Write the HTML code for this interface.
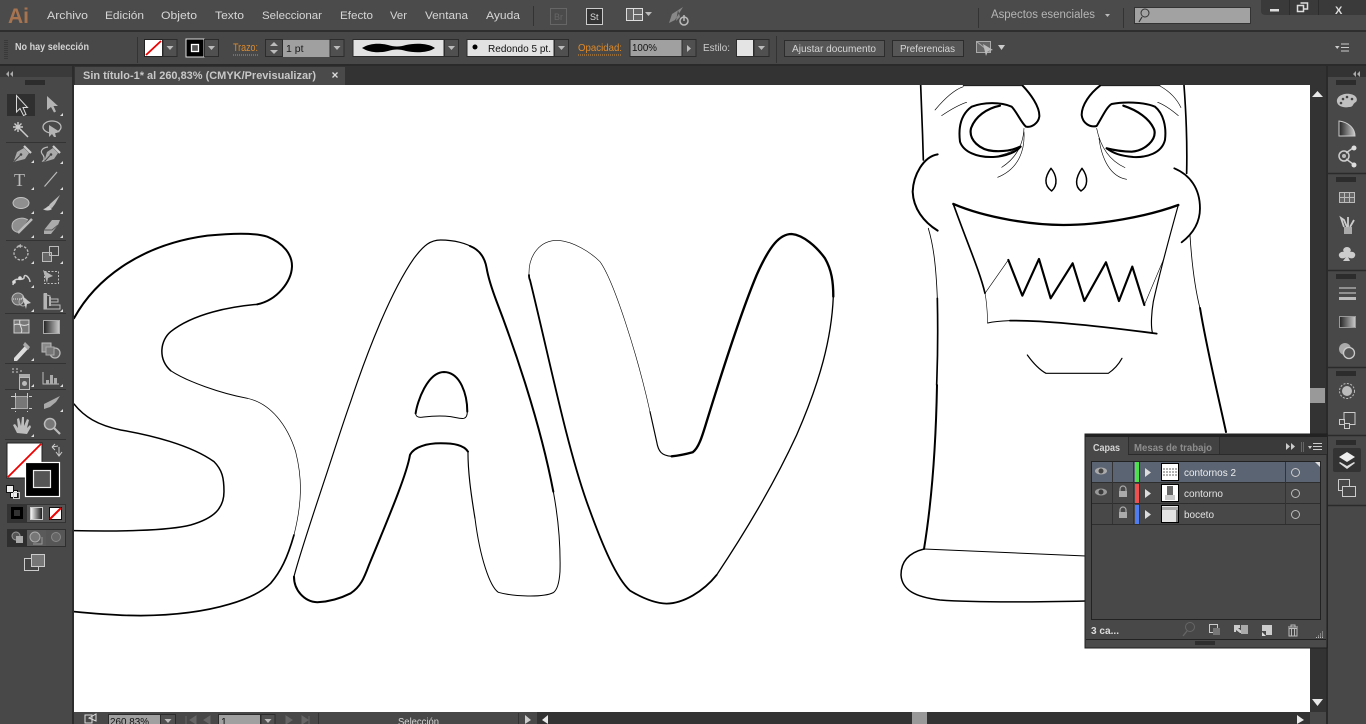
<!DOCTYPE html>
<html lang="es"><head><meta charset="utf-8"><title>Illustrator</title>
<style>
html,body{margin:0;padding:0;background:#484848;overflow:hidden}
svg{display:block;position:absolute;left:0;top:0}
text{font-family:"Liberation Sans",sans-serif;font-size:11px;fill:#d6d6d6}
</style></head><body>
<svg width="1366" height="724" viewBox="0 0 1366 724" xmlns="http://www.w3.org/2000/svg">
<defs>
<clipPath id="cv"><rect x="74" y="85" width="1236" height="627"/></clipPath>
<path id="c" d="M3 0V3H0Z" fill="#ddd"/>
<path id="d" d="M0 0H7L3.500 4Z" fill="#bbb"/>
<g id="grip"><path d="M0 0v5M2 0v5M4 0v5M6 0v5M8 0v5M10 0v5M12 0v5M14 0v5M16 0v5M18 0v5" stroke="#111" stroke-width="1"/></g>
<linearGradient id="g1"><stop offset="0" stop-color="#222"/><stop offset="1" stop-color="#ccc"/></linearGradient>
<linearGradient id="g2"><stop offset="0" stop-color="#fff"/><stop offset="1" stop-color="#111"/></linearGradient>
</defs>

<!-- backgrounds -->
<rect width="1366" height="724" fill="#484848"/>
<rect y="0" width="1366" height="30" fill="#4b4b4b"/>
<rect y="30" width="1366" height="2" fill="#2e2e2e"/>
<rect y="32" width="1366" height="32" fill="#484848"/>
<rect y="64" width="1366" height="2" fill="#2a2a2a"/>
<rect x="0" y="66" width="1366" height="19" fill="#333"/>
<rect x="0" y="66" width="72" height="646" fill="#484848"/>
<rect x="0" y="712" width="72" height="12" fill="#484848"/>
<rect x="0" y="66" width="72" height="11" fill="#3a3a3a"/>
<rect x="72" y="66" width="2" height="658" fill="#2c2c2c"/>
<rect x="75" y="67" width="270" height="18" fill="#4a4a4a"/>

<!-- canvas -->
<rect x="74" y="85" width="1236" height="627" fill="#fff"/>
<g clip-path="url(#cv)" fill="none" stroke="#000" stroke-linecap="round" stroke-linejoin="round">
 <!-- S -->
 <g transform="translate(74 225) scale(.3333)">
  <path stroke-width="6" d="M0 280C60 170 190 60 400 32C470 25 540 22 580 35C630 55 655 90 654 125C652 170 610 225 550 238"/>
  <path stroke-width="4.500" d="M550 238C470 245 360 265 290 320C260 345 250 400 290 437"/>
  <path stroke-width="3" d="M290 437C340 470 440 505 520 520"/>
  <path stroke-width="2" d="M520 520C590 535 640 600 665 680C685 760 685 830 660 930"/>
  <path stroke-width="5" d="M660 930C640 1000 620 1040 590 1075C550 1115 430 1170 200 1172C120 1172 50 1165 0 1160"/>
  <path stroke-width="4.500" d="M0 537C30 575 70 600 140 615C230 630 350 660 420 710C445 735 450 760 450 800C450 850 420 880 350 900C280 918 120 920 0 917"/>
  <!-- A -->
  <path stroke-width="3.500" d="M660 1055C665 1035 680 980 760 740C780 680 805 600 830 530C880 380 950 200 1020 100C1050 60 1070 45 1100 45C1140 45 1180 55 1200 70"/>
  <path stroke-width="6" d="M660 1055C660 1095 690 1130 730 1132C770 1130 800 1120 830 1105C860 1085 870 1060 885 1020C960 840 1000 740 1008 690C1020 665 1060 655 1100 655C1140 655 1170 660 1182 680"/>
  <path stroke-width="3.500" d="M1182 680C1182 740 1190 800 1203 880"/>
  <path stroke-width="6" d="M1025 565C1030 530 1060 442 1110 441C1160 442 1180 510 1180 560"/>
  <path stroke-width="3" d="M1180 560C1180 590 1160 580 1130 575C1090 570 1060 575 1040 577C1030 577 1025 572 1025 565"/>
 </g>
 <g transform="translate(470 225) scale(.3333)">
  <path stroke-width="6" d="M0 63C30 75 45 100 50 130C55 160 65 190 80 230C130 360 210 590 250 800"/>
  <path stroke-width="3" d="M250 800C265 880 272 960 270 1040C268 1070 262 1095 250 1103C220 1118 130 1115 85 1102C60 1085 30 1000 15 880"/>
  <!-- V -->
  <path stroke-width="1.800" d="M177 150C175 90 210 45 265 46C310 50 360 80 390 110C430 165 500 380 540 560"/>
  <path stroke-width="3.500" d="M540 560L560 650C565 680 575 692 605 694"/>
  <path stroke-width="7" d="M605 694C630 692 650 687 668 682C685 670 695 640 710 590C750 460 810 270 860 150C900 60 930 27 965 27C1000 30 1040 65 1065 100C1085 135 1090 170 1090 215"/>
  <path stroke-width="4" d="M1090 215C1085 340 1050 470 980 630C920 760 840 900 740 1050"/>
  <path stroke-width="5.500" d="M740 1050C700 1100 640 1135 590 1136C550 1135 510 1115 480 1097C440 1060 400 970 350 830C290 660 240 410 180 165C177 160 177 155 177 150"/>
 </g>
 <!-- face -->
 <g transform="translate(900 85) scale(.3333)">
  <path stroke-width="5" d="M62 0C65 70 68 150 70 225M852 0C858 80 862 180 860 265"/>
  <path stroke-width="2.500" d="M85 430C100 480 108 540 112 640"/>
  <path stroke-width="5" d="M112 640C115 780 112 840 110 900"/>
  <path stroke-width="2.500" d="M870 450C875 530 885 610 900 670"/>
  <path stroke-width="3" d="M190 2H368M780 2H600"/>
  <path stroke-width="6" d="M368 2C390 25 420 65 418 95C415 115 395 128 378 125C365 115 350 80 335 65C300 50 250 52 215 65C180 90 175 130 180 170C190 200 230 218 280 216C320 214 350 200 362 185"/>
  <path stroke-width="6.500" d="M300 62C260 70 225 95 213 130C205 165 240 195 280 198C310 200 340 195 360 185"/>
  <path stroke-width="6" d="M600 2C570 25 545 60 545 90C548 115 570 128 590 123C605 100 620 65 635 57C670 50 730 50 765 65C790 85 800 125 795 165C785 205 740 218 700 216C660 212 640 205 620 190"/>
  <path stroke-width="6.500" d="M670 62C710 75 750 100 763 135C770 165 735 197 695 200C670 200 640 195 620 190"/>
  <g stroke-width="1.800">
   <path d="M105 75C130 45 160 15 190 5M125 92C150 75 175 60 200 52M372 130C370 170 355 215 305 247M372 140C375 190 360 250 293 277M360 185C345 195 330 205 280 216"/>
   <path d="M780 3C810 20 830 40 843 68M773 52C795 60 815 75 835 92M590 130C600 180 625 225 675 248M597 160C605 220 630 275 680 283"/>
  </g>
  <path stroke-width="4.500" d="M453 250C435 275 430 300 455 318C475 300 470 270 453 250ZM546 250C525 280 525 305 543 318C565 305 565 275 546 250Z"/>
  <path stroke-width="6" d="M113 208C70 215 40 270 38 320C40 370 70 410 113 437"/>
  <path stroke-width="5.500" d="M823 250C870 270 900 310 900 370C900 410 880 445 845 472"/>
  <path stroke-width="7" d="M160 357C260 400 400 420 490 420C600 420 740 395 835 360"/>
  <path stroke-width="3.500" d="M835 360C810 450 780 560 760 650C755 680 752 720 757 742"/>
  <path stroke-width="5.500" d="M770 746C650 730 450 705 330 707"/>
  <path stroke-width="3" d="M330 707C300 708 280 710 263 714"/>
  <path stroke-width="5" d="M160 357C200 470 240 560 255 625"/>
  <path stroke-width="1.800" d="M255 625C262 660 262 690 263 714M255 625L325 525M733 660L790 525"/>
  <path stroke-width="6.500" d="M325 525L367 632L417 522L452 640L518 535L553 648L618 532L657 648L697 545L733 660"/>
  <path stroke-width="3.500" d="M382 810C400 835 420 855 438 865H625C640 855 655 840 666 820"/>
 </g>
 <path stroke-width="2" d="M937 385C936 440 932 500 924 549"/>
 <path stroke-width="2" d="M1200 308C1207 350 1218 395 1226 432"/>
 <path stroke-width="1" d="M924 549L1086 556"/>
 <path stroke-width="1.500" d="M924 549C908 553 901 562 901 575C902 590 915 597 940 600C980 603 1040 602 1086 601"/>
</g>

<!-- App bar -->
<text x="8" y="23" style="font-size:21px;font-weight:bold;fill:#a8744f">Ai</text>
<g style="font-size:11px">
<text x="47" y="19" textLength="41" lengthAdjust="spacingAndGlyphs">Archivo</text>
<text x="105" y="19" textLength="39" lengthAdjust="spacingAndGlyphs">Edición</text>
<text x="161" y="19" textLength="36" lengthAdjust="spacingAndGlyphs">Objeto</text>
<text x="215" y="19" textLength="29" lengthAdjust="spacingAndGlyphs">Texto</text>
<text x="262" y="19" textLength="60" lengthAdjust="spacingAndGlyphs">Seleccionar</text>
<text x="340" y="19" textLength="33" lengthAdjust="spacingAndGlyphs">Efecto</text>
<text x="390" y="19" textLength="17" lengthAdjust="spacingAndGlyphs">Ver</text>
<text x="425" y="19" textLength="43" lengthAdjust="spacingAndGlyphs">Ventana</text>
<text x="486" y="19" textLength="34" lengthAdjust="spacingAndGlyphs">Ayuda</text>
</g>
<path d="M533.500 6V26M978.500 8V28M1123.500 8V28" stroke="#333"/>
<rect x="550.500" y="8.500" width="16" height="16" fill="none" stroke="#666"/>
<text x="554" y="20" style="font-size:9px;fill:#666">Br</text>
<rect x="586.500" y="8.500" width="16" height="16" fill="#333" stroke="#ccc"/>
<text x="590" y="20" style="font-size:9px;fill:#ddd">St</text>
<path d="M626.500 8.500H642.500V20.500H626.500ZM633.500 8.500V20.500M633.500 14.500H642.500" fill="#666" stroke="#ddd"/>
<use href="#d" x="645" y="12"/>
<path d="M683 7L672 14L669 23L675 20ZM678 10L680 17L676 21Z" fill="#888"/>
<circle cx="684" cy="21" r="4" fill="none" stroke="#bbb" stroke-width="1.500"/><path d="M684 15V21" stroke="#bbb" stroke-width="1.500"/>
<text x="991" y="18" textLength="104" lengthAdjust="spacingAndGlyphs" style="fill:#b5b5b5;font-size:11.500px">Aspectos esenciales</text>
<path d="M1105 14H1110L1107.500 17Z" fill="#bbb"/>
<rect x="1134.500" y="7.500" width="116" height="16" fill="#a2a2a2" stroke="#333"/>
<circle cx="1145" cy="13" r="4" fill="none" stroke="#333"/><path d="M1142 17L1139 22" stroke="#333" stroke-width="1.200"/>
<path d="M1261 0H1366V15H1266Q1261 15 1261 11Z" fill="#3a3a3a"/>
<path d="M1289.500 0V15M1318.500 0V15" stroke="#2c2c2c"/>
<rect x="1270" y="9" width="9" height="2.500" fill="#ddd"/>
<path d="M1297.500 5.500H1303.500V11.500H1297.500ZM1300.500 3H1307.500V9H1303.500" fill="none" stroke="#ddd" stroke-width="1.500"/>
<text x="1335" y="14" style="font-size:11px;font-weight:bold;fill:#ddd">X</text>

<!-- Control bar -->
<path d="M5 40V60M7 40V60" stroke="#2a2a2a" stroke-dasharray="1 1"/>
<path d="M137.500 37V63" stroke="#333"/>
<text x="15" y="50" textLength="74" lengthAdjust="spacingAndGlyphs" style="font-size:10.500px;font-weight:bold;fill:#d4d4d4">No hay selección</text>
<rect x="144.500" y="39.500" width="18" height="17" fill="#fff" stroke="#222"/>
<path d="M146 55L161 41" stroke="#e00" stroke-width="1.800"/>
<rect x="163" y="39.500" width="14" height="17" fill="#505050" stroke="#2c2c2c"/><use href="#d" x="166.500" y="46"/>
<rect x="186" y="39" width="18" height="18" fill="#000" stroke="#ddd"/>
<rect x="191.500" y="44.500" width="7" height="7" fill="#555" stroke="#fff" stroke-width="1.300"/>
<rect x="204.500" y="39.500" width="14" height="17" fill="#505050" stroke="#2c2c2c"/><use href="#d" x="208" y="46"/>
<text x="233" y="51" textLength="25" lengthAdjust="spacingAndGlyphs" style="fill:#d98a30">Trazo:</text>
<path d="M233 55H259" stroke="#d98a30" stroke-dasharray="1 1"/>
<rect x="265.500" y="39.500" width="17" height="17" fill="#4d4d4d" stroke="#2c2c2c"/>
<path d="M270 46H278L274 42ZM270 50H278L274 54Z" fill="#bbb"/>
<rect x="283" y="40" width="47" height="17" fill="#a0a0a0"/>
<text x="286" y="52" style="fill:#1a1a1a;font-size:10.500px">1 pt</text>
<rect x="330" y="39.500" width="14" height="17" fill="#505050" stroke="#2c2c2c"/><use href="#d" x="333.500" y="46"/>
<rect x="353" y="39.500" width="91" height="17" fill="#e2e2e2" stroke="#2c2c2c"/>
<path d="M362 48C370 43 380 43 388 45C394 47 400 47 406 45C415 43 428 43 435 48C428 53 415 53 406 51C400 49 394 49 388 51C380 53 370 53 362 48Z" fill="#000"/>
<rect x="444.500" y="39.500" width="14" height="17" fill="#505050" stroke="#2c2c2c"/><use href="#d" x="448" y="46"/>
<rect x="467" y="39.500" width="87" height="17" fill="#e2e2e2" stroke="#2c2c2c"/>
<circle cx="475" cy="47" r="2.500" fill="#000"/>
<text x="488" y="52" textLength="63" lengthAdjust="spacingAndGlyphs" style="fill:#111;font-size:10.500px">Redondo 5 pt.</text>
<rect x="554.500" y="39.500" width="14" height="17" fill="#505050" stroke="#2c2c2c"/><use href="#d" x="558" y="46"/>
<text x="578" y="51" textLength="44" lengthAdjust="spacingAndGlyphs" style="fill:#e08a28;font-size:10.500px">Opacidad:</text>
<path d="M578 55H622" stroke="#d98a30" stroke-dasharray="1 1"/>
<rect x="630" y="39.500" width="52" height="17" fill="#a0a0a0" stroke="#2c2c2c"/>
<text x="632" y="51" textLength="25" lengthAdjust="spacingAndGlyphs" style="fill:#111;font-size:10.500px">100%</text>
<rect x="682" y="39.500" width="14" height="17" fill="#505050" stroke="#2c2c2c"/><path d="M687 45V52L691 48.500Z" fill="#bbb"/>
<text x="703" y="51" textLength="27" lengthAdjust="spacingAndGlyphs" style="fill:#ccc;font-size:10.500px">Estilo:</text>
<rect x="736.500" y="39.500" width="17" height="17" fill="#e4e4e4" stroke="#2c2c2c"/>
<rect x="754" y="39.500" width="15" height="17" fill="#505050" stroke="#2c2c2c"/><use href="#d" x="758" y="46"/>
<path d="M776.500 36V63" stroke="#333"/>
<rect x="784.500" y="40.500" width="100" height="16" fill="#565656" stroke="#2c2c2c"/>
<text x="792" y="52" textLength="84" lengthAdjust="spacingAndGlyphs" style="font-size:10.500px">Ajustar documento</text>
<rect x="892.500" y="40.500" width="71" height="16" fill="#565656" stroke="#2c2c2c"/>
<text x="900" y="52" textLength="55" lengthAdjust="spacingAndGlyphs" style="font-size:10.500px">Preferencias</text>
<path d="M976.500 41.500H990.500V52.500H976.500ZM976.500 41.500L990.500 52.500" fill="#666" stroke="#aaa"/>
<path d="M983 44L993 50L988 51L986 56Z" fill="#bbb"/>
<path d="M998 45H1005L1001.500 50Z" fill="#ccc"/>
<path d="M1341 44H1349M1341 47.500H1349M1341 51H1349" stroke="#ccc"/><path d="M1335 46H1339.500L1337.200 49Z" fill="#ccc"/>

<!-- Tab -->
<text x="83" y="79" textLength="233" lengthAdjust="spacingAndGlyphs" style="font-size:11px;font-weight:bold;fill:#c8c8c8">Sin título-1* al 260,83% (CMYK/Previsualizar)</text>
<path d="M332.500 72.500L337.500 77.500M337.500 72.500L332.500 77.500" stroke="#ddd" stroke-width="1.300"/>
<path d="M9 71L6 74L9 77ZM13 71L10 74L13 77Z" fill="#aaa"/>
<use href="#grip" x="26" y="80"/>

<!-- Tools -->
<rect x="7" y="94" width="28" height="22" fill="#2f2f2f"/>
<g fill="#b4b4b4" stroke="none">
 <path d="M16.500 95.500V112L20 108.500L23.500 115.500L26 114.500L23 107.500H27.500Z" fill="#333" stroke="#d8d8d8"/>
 <path d="M47 96V110L51 107L54 112.500L56 111.500L53.500 106H58Z"/>
 <use href="#c" x="60" y="113"/>
 <!-- wand -->
 <path d="M18 122V132M13 127H23M14.500 123.500L21.500 130.500M21.500 123.500L14.500 130.500" stroke="#ccc" stroke-width="1.400" fill="none"/>
 <path d="M20 129L28 137" stroke="#ccc" stroke-width="1.500"/>
 <!-- lasso -->
 <ellipse cx="52" cy="127" rx="9" ry="6" fill="none" stroke="#bbb" stroke-width="1.300"/>
 <path d="M49 125V137L52 134L54 137H56L55 133L60 132Z"/>
 <path d="M6 142.500H66M6 240.500H66M5 313.500H66M5 363.500H66M5 389.500H66M5 439.500H66" stroke="#333" fill="none"/>
 <!-- pen -->
 <path d="M13.500 162L17 152L24 148L29 153L25 159Z" fill="#aaa"/>
 <path d="M24 146L31 153" stroke="#ccc" stroke-width="2.200" fill="none"/>
 <path d="M14 161.500L20 155.500" stroke="#444" fill="none"/><circle cx="21" cy="154.500" r="1.300" fill="#444"/>
 <path d="M44 162L47 152L53 148L58 153L54 159Z" fill="#aaa"/>
 <path d="M53 146L60 153" stroke="#ccc" stroke-width="2.200" fill="none"/>
 <path d="M44.500 161.500L50 155.500" stroke="#444" fill="none"/><circle cx="51" cy="154.500" r="1.300" fill="#444"/>
 <path d="M48 147C41 148 40 152 43 155C45 158 44 162 42 161" fill="none" stroke="#bbb" stroke-width="1.200"/>
 <use href="#c" x="31" y="160"/><use href="#c" x="60" y="161"/>
 <use href="#c" x="31" y="187"/><use href="#c" x="60" y="187"/>
 <use href="#c" x="31" y="211"/><use href="#c" x="60" y="211"/>
 <use href="#c" x="31" y="235"/><use href="#c" x="60" y="235"/>
 <use href="#c" x="31" y="261"/><use href="#c" x="60" y="261"/>
 <use href="#c" x="31" y="285"/>
 <use href="#c" x="31" y="309"/><use href="#c" x="60" y="309"/>
 <use href="#c" x="31" y="358"/><use href="#c" x="31" y="384"/><use href="#c" x="60" y="384"/>
 <use href="#c" x="60" y="409"/><use href="#c" x="31" y="434"/>
 <path d="M44.500 186.500L57 172" stroke="#bbb" stroke-width="1.200" fill="none"/>
 <ellipse cx="21" cy="203" rx="8" ry="5.500" fill="#8f8f8f" stroke="#c4c4c4"/>
 <path d="M60 195L50 204L48 207L52 208L55 204Z" fill="#bbb"/><path d="M43 209C46 209 47 206 49 206L52 209C50 211 45 211 43 209Z" fill="#ccc"/>
 <!-- shaper -->
 <path d="M28 220C22 216 12 219 12 226C12 231 17 233 20 232" fill="#8f8f8f" stroke="#bbb"/>
 <path d="M18 233L32 219" stroke="#bbb" stroke-width="2.500" fill="none"/>
 <!-- eraser -->
 <path d="M44 230L52 220H60L58 225L51 234H44Z" fill="#aaa"/><path d="M44 230H52L58 225" stroke="#555" fill="none"/>
 <!-- rotate -->
 <circle cx="21" cy="253" r="7" fill="none" stroke="#bbb" stroke-width="1.300" stroke-dasharray="2.500 1.500"/>
 <path d="M17 246L21 244V248Z"/>
 <!-- scale -->
 <rect x="42.500" y="252.500" width="9" height="9" fill="#666" stroke="#bbb"/><rect x="49.500" y="246.500" width="9" height="9" fill="none" stroke="#bbb"/>
 <!-- warp -->
 <path d="M13 285C14 275 21 282 24 278C24 272 30 278 30 282" fill="none" stroke="#ccc" stroke-width="1.500"/><circle cx="14" cy="282" r="1.800" fill="#ddd"/><circle cx="20" cy="278" r="1.800" fill="#ddd"/>
 <!-- free transform -->
 <rect x="44.500" y="271.500" width="14" height="12" fill="none" stroke="#bbb" stroke-dasharray="2 1.500"/><path d="M43 270L53 276L48 278L47 283Z"/>
 <!-- shape builder -->
 <circle cx="18" cy="299" r="6" fill="#777" stroke="#bbb"/><circle cx="23" cy="302" r="4" fill="none" stroke="#aaa"/><path d="M22 296L31 303L27 304L26 309Z" fill="#ccc"/><path d="M13 299H22" stroke="#ddd" stroke-dasharray="1 1"/>
 <!-- perspective -->
 <path d="M44 294V309H60V305H50V302H58V299H50V296Z" fill="none" stroke="#bbb"/><path d="M44 293H47V309H44ZM49 297H51V306H49Z"/>
 <!-- mesh -->
 <rect x="14" y="320" width="15" height="13" fill="#777" stroke="#ccc"/><path d="M14 325C19 322 23 328 29 324M20 320C18 325 24 329 21 333" stroke="#ddd" fill="none"/>
 <!-- gradient -->
 <rect x="43.500" y="320.500" width="16" height="13" fill="url(#g1)" stroke="#aaa"/>
 <!-- eyedropper -->
 <path d="M14 358L25 346L28 349L17 361H14Z" fill="#ddd"/><path d="M25 342L30 347L28 350L23 345Z" fill="#aaa"/>
 <!-- blend -->
 <rect x="42" y="343" width="9" height="9" fill="#888" stroke="#bbb"/><circle cx="55" cy="353" r="5" fill="#666" stroke="#bbb" stroke-width="1.300"/><rect x="46" y="347" width="8" height="8" fill="#777" stroke="#aaa"/>
 <!-- sprayer -->
 <path d="M12 369h2M16 369h2M12 372h2M16 372h2M20 371h2" stroke="#ccc" fill="none"/><rect x="19" y="374" width="11" height="3" fill="#aaa"/><rect x="19.500" y="377.500" width="10" height="12" fill="#555" stroke="#bbb"/><circle cx="24.500" cy="383.500" r="2.500" fill="#bbb"/>
 <!-- graph -->
 <path d="M43 372V384H59" fill="none" stroke="#bbb"/><path d="M46 380h3v4h-3zM50 375h3v9h-3zM54 378h3v6h-3z" fill="#aaa"/>
 <!-- artboard -->
 <rect x="15.500" y="396.500" width="12" height="12" fill="#777" stroke="#aaa"/><path d="M11 396.500H32M11 408.500H32M15.500 393V412M27.500 393V412" stroke="#ccc" fill="none" stroke-dasharray="5 13"/>
 <!-- slice -->
 <path d="M60 396L44 404L44 409L50 407L56 402Z" fill="#aaa"/>
 <!-- hand -->
 <path d="M17 433L13 425L15 424L18 428L17 419L19 418L21 426L22 417L24 417L24 426L27 419L29 420L27 428L30 425L31 427L27 434Z" fill="#bdbdbd"/>
 <!-- zoom -->
 <circle cx="50" cy="424" r="5.500" fill="#777" stroke="#bbb" stroke-width="1.500"/><path d="M54 428L60 434" stroke="#bbb" stroke-width="2.200"/>
</g>
<text x="14" y="186" style="font-family:'Liberation Serif',serif;font-size:18px;fill:#bbb">T</text>

<!-- fill stroke -->
<rect x="7" y="443" width="35" height="35" fill="#fff" stroke="#222"/>
<path d="M8 477L41 444" stroke="#e00" stroke-width="1.800"/>
<rect x="25.500" y="462.500" width="34" height="34" fill="#000" stroke="#fff" stroke-width="1.200"/>
<rect x="33.500" y="470.500" width="17" height="17" fill="#555" stroke="#eee" stroke-width="1.200"/>
<path d="M52 447L58 446M59 447V455M56 452L59 456L62 452M52 447L55 444M52 447L55 450" stroke="#ccc" fill="none"/>
<rect x="10.500" y="490.500" width="7" height="7" fill="#eee" stroke="#111"/><rect x="6.500" y="485.500" width="7" height="7" fill="#eee" stroke="#111"/>
<rect x="13.500" y="492.500" width="6" height="6" fill="none" stroke="#ccc"/>
<rect x="7" y="504" width="59" height="19" fill="#333"/>
<rect x="27" y="505" width="19" height="17" fill="#555"/><rect x="46" y="505" width="19" height="17" fill="#555"/>
<rect x="11" y="507" width="12" height="12" fill="#000"/><rect x="14" y="510" width="6" height="6" fill="#333"/>
<rect x="30.500" y="507.500" width="12" height="12" fill="url(#g2)" stroke="#ccc"/>
<rect x="49.500" y="507.500" width="12" height="12" fill="#fff" stroke="#111"/><path d="M50 519L61 508" stroke="#e00" stroke-width="2"/>
<rect x="7" y="529" width="59" height="18" fill="#2e2e2e"/>
<rect x="27" y="530" width="19" height="16" fill="#5a5a5a"/><rect x="46" y="530" width="19" height="16" fill="#565656"/>
<circle cx="16" cy="536" r="4" fill="#555" stroke="#999"/><rect x="16" y="536" width="7" height="7" fill="#aaa"/>
<circle cx="35" cy="537" r="5" fill="#777" stroke="#aaa"/><path d="M33 544H42V537" stroke="#999" fill="none"/>
<circle cx="56" cy="537" r="4.500" fill="#666" stroke="#888"/>
<rect x="24.500" y="558.500" width="14" height="12" fill="#444" stroke="#ccc"/><rect x="31.500" y="554.500" width="13" height="12" fill="#777" stroke="#ccc"/>

<!-- scrollbar -->
<rect x="1310" y="85" width="16" height="627" fill="#333"/>
<rect x="1326" y="66" width="2" height="658" fill="#2a2a2a"/>
<rect x="1310" y="388" width="15" height="15" fill="#999"/>
<path d="M1312 97H1323L1317.500 91Z" fill="#e8e8e8"/>
<path d="M1312 699H1323L1317.500 706Z" fill="#e8e8e8"/>
<rect x="1328" y="66" width="38" height="658" fill="#484848"/>
<rect x="1328" y="66" width="38" height="11" fill="#333"/>
<path d="M1356 71L1353 74L1356 77ZM1360 71L1357 74L1360 77Z" fill="#aaa"/>
<path d="M1328 173.500H1366M1328 270.500H1366M1328 367.500H1366M1328 435.500H1366M1328 505.500H1366" stroke="#2a2a2a" stroke-width="1.500"/>
<use href="#grip" x="1337" y="80"/><use href="#grip" x="1337" y="177"/><use href="#grip" x="1337" y="274"/><use href="#grip" x="1337" y="371"/><use href="#grip" x="1337" y="440"/>
<!-- dock icons -->
<path d="M1337 102C1336 96 1344 93 1350 94C1357 95 1358 100 1356 102C1352 104 1354 107 1349 107C1345 108 1338 107 1337 102Z" fill="#c0c0c0"/>
<circle cx="1343" cy="99" r="1.300" fill="#444"/><circle cx="1347" cy="97" r="1.300" fill="#444"/><circle cx="1352" cy="99" r="1.300" fill="#444"/><circle cx="1341" cy="103" r="1.300" fill="#444"/>
<path d="M1339 121V136H1355C1355 128 1348 122 1339 121Z" fill="url(#g1)" stroke="#ccc"/>
<circle cx="1344" cy="156" r="5" fill="none" stroke="#ccc" stroke-width="1.500"/><circle cx="1344" cy="156" r="2" fill="#bbb"/>
<path d="M1346 153L1353 148M1346 159L1353 164" stroke="#ccc" stroke-width="1.500"/><circle cx="1354" cy="148" r="2.500" fill="#ddd"/><circle cx="1354" cy="165" r="2.500" fill="#ddd"/>
<rect x="1339.500" y="192.500" width="15" height="10" fill="#666" stroke="#bbb"/><path d="M1344.500 192V203M1349.500 192V203M1339 197.500H1355" stroke="#bbb"/>
<rect x="1344" y="227" width="8" height="7" fill="#aaa"/><path d="M1344 227L1341 218L1344 220L1347 227M1348 227V217M1350 227L1354 220" stroke="#ccc" stroke-width="1.800" fill="none"/>
<path d="M1347 247C1350 247 1352 250 1350 252C1354 251 1356 254 1355 256C1354 259 1350 259 1348 257L1350 261H1343L1346 257C1344 259 1340 259 1339 256C1338 254 1341 251 1344 252C1342 250 1344 247 1347 247Z" fill="#ccc"/>
<path d="M1339 288H1356M1339 293H1356" stroke="#bbb" stroke-width="1.200"/><rect x="1339" y="297" width="17" height="3" fill="#bbb"/>
<rect x="1339.500" y="316.500" width="16" height="11" fill="url(#g1)" stroke="#999"/>
<circle cx="1345" cy="349" r="6" fill="#aaa"/><circle cx="1349" cy="353" r="5.500" fill="#555" stroke="#ccc" stroke-width="1.300"/>
<circle cx="1347" cy="391" r="7.500" fill="none" stroke="#bbb" stroke-dasharray="2 1.500"/><circle cx="1347" cy="391" r="5" fill="#bbb"/>
<path d="M1344 420.500V412.500H1355V424.500H1350" fill="none" stroke="#ccc"/><rect x="1339.500" y="419.500" width="5" height="5" fill="none" stroke="#ccc"/><rect x="1344.500" y="423.500" width="5" height="5" fill="none" stroke="#ccc"/>
<rect x="1333" y="448" width="28" height="24" rx="2" fill="#333"/>
<path d="M1347 452L1355 457L1347 462L1339 457Z" fill="#eee"/><path d="M1340 462L1347 466L1354 462L1355 463L1347 469L1339 463Z" fill="#ddd"/>
<path d="M1338.500 479.500H1349.500V494.500M1338.500 479.500V490.500H1344" fill="none" stroke="#ccc"/><rect x="1342.500" y="486.500" width="13" height="10" fill="#484848" stroke="#ccc"/>

<!-- Panel -->
<rect x="1085" y="434" width="242" height="214" fill="#484848" stroke="#1f1f1f"/>
<rect x="1085" y="434" width="242" height="3" fill="#222"/>
<rect x="1128" y="437" width="199" height="17" fill="#3a3a3a"/>
<rect x="1128" y="437" width="91" height="17" fill="#424242"/>
<path d="M1128 454.500H1327" stroke="#2a2a2a"/><path d="M1128.500 437V454M1219.500 437V454" stroke="#2e2e2e"/>
<text x="1093" y="451" textLength="27" lengthAdjust="spacingAndGlyphs" style="font-weight:bold;font-size:10.500px;fill:#d4d4d4">Capas</text>
<text x="1134" y="451" textLength="78" lengthAdjust="spacingAndGlyphs" style="font-weight:bold;font-size:10.500px;fill:#8d8d8d">Mesas de trabajo</text>
<path d="M1286 443V450L1290 446.500ZM1291 443V450L1295 446.500Z" fill="#ccc"/><path d="M1301.500 442V452M1303.500 442V452" stroke="#666"/>
<path d="M1308 446H1312L1310 449Z" fill="#ccc"/><path d="M1313 443.500H1322M1313 446.500H1322M1313 449.500H1322" stroke="#ccc"/>
<rect x="1091.500" y="461.500" width="229" height="158" fill="#484848" stroke="#222"/>
<rect x="1092" y="462" width="228" height="20" fill="#5a6473"/>
<path d="M1092 482.500H1320M1092 503.500H1320M1092 524.500H1320" stroke="#2e2e2e"/>
<path d="M1112.500 462V524M1133.500 462V524M1139.500 462V524M1285.500 462V524" stroke="#333"/>
<path d="M1315 462H1320V467Z" fill="#ddd"/>
<rect x="1135" y="462" width="4" height="20" fill="#4ee04e"/>
<rect x="1135" y="484" width="4" height="19" fill="#ee4f4f"/>
<rect x="1135" y="505" width="4" height="19" fill="#4f7cf0"/>
<path d="M1145 468V477L1151 472.500ZM1145 489V498L1151 493.500ZM1145 510V519L1151 514.500Z" fill="#ddd"/>
<!-- eyes -->
<ellipse cx="1101" cy="471" rx="6" ry="3.500" fill="#aaa"/><circle cx="1101" cy="471" r="2.500" fill="#444"/>
<ellipse cx="1101" cy="492" rx="6" ry="3.500" fill="#999"/><circle cx="1101" cy="492" r="2.500" fill="#3a3a3a"/>
<!-- locks -->
<path d="M1120 491V489A3 3 0 0 1 1126 489V491" fill="none" stroke="#aaa" stroke-width="1.200"/><rect x="1119" y="491" width="8" height="6" fill="#aaa"/>
<path d="M1120 512V510A3 3 0 0 1 1126 510V512" fill="none" stroke="#aaa" stroke-width="1.200"/><rect x="1119" y="512" width="8" height="6" fill="#aaa"/>
<!-- thumbs -->
<rect x="1161.500" y="463.500" width="17" height="17" fill="#fff" stroke="#000"/>
<path d="M1163 469H1177M1163 472H1177M1163 475H1177" stroke="#999" stroke-width="1.500" stroke-dasharray="2 1"/>
<rect x="1161.500" y="484.500" width="17" height="17" fill="#fff" stroke="#000"/>
<rect x="1167" y="486" width="6" height="9" fill="#666"/><rect x="1165" y="495" width="10" height="5" fill="#ccc"/>
<rect x="1161.500" y="505.500" width="17" height="17" fill="#e4e4e4" stroke="#000"/>
<rect x="1162" y="507" width="16" height="3" fill="#aaa"/><rect x="1176" y="510" width="2" height="12" fill="#777"/>
<text x="1184" y="476" textLength="52" lengthAdjust="spacingAndGlyphs" style="font-size:10.500px;fill:#eee">contornos 2</text>
<text x="1184" y="497" textLength="39" lengthAdjust="spacingAndGlyphs" style="font-size:10.500px;fill:#e4e4e4">contorno</text>
<text x="1184" y="518" textLength="30" lengthAdjust="spacingAndGlyphs" style="font-size:10.500px;fill:#e4e4e4">boceto</text>
<circle cx="1295.500" cy="472.500" r="4" fill="none" stroke="#ccc"/>
<circle cx="1295.500" cy="493.500" r="4" fill="none" stroke="#bbb"/>
<circle cx="1295.500" cy="514.500" r="4" fill="none" stroke="#bbb"/>
<text x="1091" y="634" textLength="28" lengthAdjust="spacingAndGlyphs" style="font-weight:bold;font-size:10.500px;fill:#ddd">3 ca...</text>
<circle cx="1190" cy="627" r="4.500" fill="none" stroke="#666"/><path d="M1187 631L1183 636" stroke="#666" stroke-width="1.300"/>
<rect x="1209.500" y="624.500" width="8" height="8" fill="none" stroke="#ccc"/><rect x="1213" y="628" width="7" height="7" fill="#777"/>
<path d="M1234 625H1240V628H1238L1244 633H1240L1236 630V632H1234Z" fill="#ccc"/><rect x="1241" y="625" width="7" height="9" fill="#aaa"/>
<path d="M1262 625H1272V635H1266V631H1262Z" fill="#ccc"/><path d="M1262 632L1266 636H1262Z" fill="#ddd"/>
<path d="M1288 627H1298M1291 627V625H1295V627" stroke="#bbb" fill="none"/><path d="M1289 628.500H1297V636H1289ZM1291.500 629V636M1294.500 629V636" stroke="#bbb" fill="none"/>
<path d="M1322 632h1M1320 634h1M1322 634h1M1318 636h1M1320 636h1M1322 636h1M1316 637.500h1M1318 637.500h1M1320 637.500h1M1322 637.500h1" stroke="#bbb"/>
<rect x="1086" y="639" width="240" height="8" fill="#4a4a4a"/><path d="M1086 639.500H1326" stroke="#222"/>
<g transform="translate(1196 641) scale(1 .8)"><use href="#grip"/></g>

<!-- Status bar -->
<rect x="74" y="712" width="1252" height="12" fill="#484848"/>
<path d="M85 715H92V723H85ZM89 718L96 714V721Z" fill="none" stroke="#ddd"/>
<rect x="108.500" y="714.500" width="52" height="14" fill="#a0a0a0" stroke="#2c2c2c"/>
<text x="110" y="725" textLength="39" lengthAdjust="spacingAndGlyphs" style="fill:#111;font-size:10.500px">260,83%</text>
<rect x="160.500" y="714.500" width="15" height="14" fill="#505050" stroke="#2c2c2c"/><use href="#d" x="164.500" y="719"/>
<path d="M186 716V724M196 716L190 720L196 724ZM210 716L204 720L210 724Z" fill="#666" stroke="#666"/>
<rect x="218.500" y="714.500" width="42" height="14" fill="#a0a0a0" stroke="#2c2c2c"/>
<text x="221" y="725" style="fill:#111;font-size:10.500px">1</text>
<rect x="261" y="714.500" width="14" height="14" fill="#505050" stroke="#2c2c2c"/><use href="#d" x="264.500" y="719"/>
<path d="M286 716L292 720L286 724ZM302 716L308 720L302 724ZM309 716V724" fill="#666" stroke="#666"/>
<path d="M318.500 713V724M518.500 713V724" stroke="#333"/>
<text x="398" y="725" textLength="41" lengthAdjust="spacingAndGlyphs" style="fill:#d4d4d4;font-size:10.500px">Selección</text>
<path d="M525 715V724L531 720Z" fill="#ccc"/>
<rect x="537" y="712" width="773" height="12" fill="#333"/>
<path d="M548 715V724L542 720Z" fill="#e8e8e8"/>
<rect x="912" y="712" width="15" height="12" fill="#999"/>
<path d="M1297 715V724L1304 720Z" fill="#e8e8e8"/>
<rect x="1310" y="712" width="16" height="12" fill="#484848"/>
</svg>
</body></html>
